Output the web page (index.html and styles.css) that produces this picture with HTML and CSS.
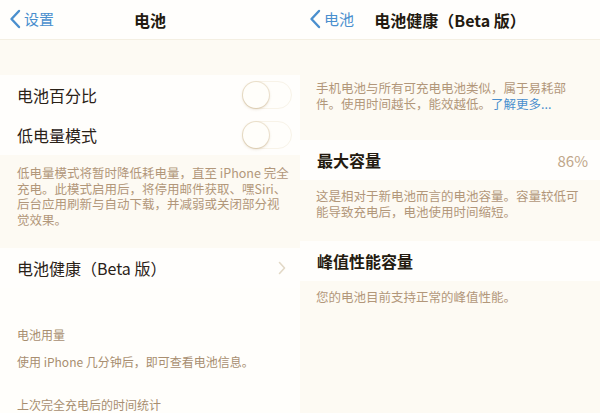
FILE: index.html
```html
<!DOCTYPE html>
<html lang="zh-CN">
<head>
<meta charset="utf-8">
<title>电池</title>
<link rel="stylesheet" href="styles.css">
</head>
<body>
<div class="screens">
  <section class="screen">
    <header class="nav">
      <a class="back"><svg class="chev" viewBox="0 0 12 20" width="12" height="20"><path d="M10 2 L2.5 10 L10 18" fill="none" stroke="#4a8fce" stroke-width="2.4" stroke-linecap="round" stroke-linejoin="round"/></svg><span>设置</span></a>
      <h1 class="title">电池</h1>
    </header>
    <div class="band band-top"></div>
    <div class="group">
      <div class="row"><span class="label">电池百分比</span><span class="toggle"><span class="knob"></span></span></div>
      <div class="row"><span class="label">低电量模式</span><span class="toggle"><span class="knob"></span></span></div>
    </div>
    <div class="band">
      <p class="note note-left">低电量模式将暂时降低耗电量，直至 iPhone 完全<br>充电。此模式启用后，将停用邮件获取、嘿Siri、<br>后台应用刷新与自动下载，并减弱或关闭部分视<br>觉效果。</p>
    </div>
    <div class="group">
      <div class="row"><span class="label">电池健康（Beta 版）</span><svg class="disclosure" viewBox="0 0 8 14" width="8" height="14"><path d="M1.5 1.5 L6.5 7 L1.5 12.5" fill="none" stroke="#e2d8c6" stroke-width="1.6" stroke-linecap="round" stroke-linejoin="round"/></svg></div>
    </div>
    <div class="usage">
      <p class="small head">电池用量</p>
      <p class="small">使用 iPhone 几分钟后，即可查看电池信息。</p>
      <p class="small stat">上次完全充电后的时间统计</p>
    </div>
  </section>
  <section class="screen">
    <header class="nav">
      <a class="back"><svg class="chev" viewBox="0 0 12 20" width="12" height="20"><path d="M10 2 L2.5 10 L10 18" fill="none" stroke="#4a8fce" stroke-width="2.4" stroke-linecap="round" stroke-linejoin="round"/></svg><span>电池</span></a>
      <h1 class="title">电池健康（Beta 版）</h1>
    </header>
    <div class="band band-intro">
      <p class="note">手机电池与所有可充电电池类似，属于易耗部<br>件。使用时间越长，能效越低。<a class="link">了解更多...</a></p>
    </div>
    <div class="group">
      <div class="row"><span class="label strong">最大容量</span><span class="value">86%</span></div>
    </div>
    <div class="band band-mid">
      <p class="note">这是相对于新电池而言的电池容量。容量较低可<br>能导致充电后，电池使用时间缩短。</p>
    </div>
    <div class="group">
      <div class="row"><span class="label strong">峰值性能容量</span></div>
    </div>
    <div class="band band-end">
      <p class="note">您的电池目前支持正常的峰值性能。</p>
    </div>
  </section>
</div>
</body>
</html>
```

FILE: styles.css
```css
* { box-sizing: border-box; }
html, body { margin: 0; padding: 0; }
body {
  width: 600px;
  height: 413px;
  overflow: hidden;
  background: #fffefb;
  font-family: "Noto Sans CJK SC", "Noto Sans", sans-serif;
  color: #2a2117;
}
.screens { display: flex; }
.screen {
  width: 300px;
  display: flex;
  flex-direction: column;
}
.nav {
  position: relative;
  height: 40px;
  display: flex;
  align-items: center;
  justify-content: center;
  background: #fffefc;
  border-bottom: 1px solid #f4efe2;
}
.back {
  position: absolute;
  left: 9px;
  top: 9px;
  display: flex;
  align-items: center;
  gap: 3px;
  color: #4a8fce;
  font-size: 15px;
  line-height: 20px;
}
.chev { display: block; }
.title {
  margin: 0;
  font-size: 16px;
  font-weight: 700;
  color: #231a10;
  line-height: 20px;
}
.band { background: #fdfaf3; }
.band-top { height: 35px; }
.group { background: #fffefc; }
.row {
  height: 40px;
  padding: 0 8px 0 17px;
  display: flex;
  align-items: center;
  justify-content: space-between;
}
.label { font-size: 16px; color: #2a2117; }
.label.strong { font-weight: 700; color: #241b10; }
.toggle {
  position: relative;
  width: 50px;
  height: 28px;
  border-radius: 14px;
  border: 1px solid #f8f3e8;
  background: #fffefb;
}
.knob {
  position: absolute;
  left: 0;
  top: 0;
  width: 26px;
  height: 26px;
  border-radius: 50%;
  background: #fffefa;
  box-shadow: 0 1px 3px rgba(160, 130, 80, 0.35), 0 0 0 1px rgba(220, 200, 160, 0.35);
}
.disclosure { margin-right: 6px; }
.note {
  margin: 0;
  padding: 6px 4px 0 17px;
  font-size: 12.5px;
  line-height: 15.5px;
  color: #b2977a;
  white-space: nowrap;
}
.note-left { height: 93px; padding-top: 10px; }
.band-intro { height: 100px; padding-top: 40px; }
.band-intro .note { padding-left: 16px; padding-top: 0; line-height: 16px; }
.link { color: #4a8fce; }
.value { font-size: 15px; color: #bfa78a; margin-right: 4px; }
.band-mid { height: 61px; }
.band-mid .note { padding-left: 16px; padding-top: 8px; line-height: 16px; }
.band-end { flex: 1; }
.band-end .note { padding-left: 16px; padding-top: 8px; }
.usage {
  flex: 1;
  background: #fffefb;
  padding: 39px 0 0 17px;
}
.small {
  margin: 0;
  font-size: 12px;
  line-height: 16px;
  color: #a88e70;
}
.small.head { margin-bottom: 11px; }
.small.stat { margin-top: 27px; }
```
